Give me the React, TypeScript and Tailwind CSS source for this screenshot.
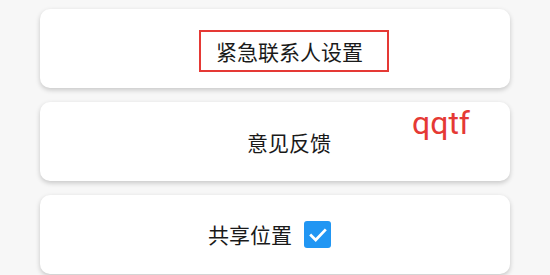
export default function App() {
  return (
    <div
      className="w-[550px] h-[275px] overflow-hidden bg-[#f7f7f7] px-10 pt-[9px] flex flex-col gap-[14px]"
      style={{ fontFamily: '"Noto Sans CJK SC", "Noto Sans", sans-serif' }}
    >
      {/* 紧急联系人 */}
      <div className="h-[79px] shrink-0 rounded-[10px] bg-white shadow-[0_2px_5px_rgba(0,0,0,0.2)] flex items-center pl-[159px] pt-[5px]">
        <div className="w-[190px] h-[42px] border-2 border-[#e53935] flex items-center pl-[15px]">
          <span className="text-[21px] leading-none text-[#1a1a1a]">紧急联系人设置</span>
        </div>
      </div>

      {/* 意见反馈 */}
      <div className="relative h-[79px] shrink-0 rounded-[10px] bg-white shadow-[0_2px_5px_rgba(0,0,0,0.2)] flex items-center pl-[207px] pt-[2px]">
        <span className="text-[21px] leading-none text-[#1a1a1a]">意见反馈</span>
        <span
          className="absolute left-[372px] top-[5px] text-[32px] leading-none text-[#e53935]"
          style={{ fontFamily: 'Roboto, "Noto Sans", sans-serif' }}
        >
          qqtf
        </span>
      </div>

      {/* 共享位置 */}
      <div className="h-[79px] shrink-0 rounded-[10px] bg-white shadow-[0_2px_5px_rgba(0,0,0,0.2)] flex items-center pl-[168px] gap-3">
        <span className="text-[21px] leading-none text-[#1a1a1a]">共享位置</span>
        <span className="w-[27px] h-[27px] rounded-[3px] bg-[#2196f3] flex items-center justify-center">
          <svg viewBox="0 0 24 24" className="w-[22px] h-[22px]" fill="none" stroke="white" strokeWidth={3}>
            <path d="M4.5 12.5l5 5L19.5 7" strokeLinecap="square" />
          </svg>
        </span>
      </div>
    </div>
  );
}
